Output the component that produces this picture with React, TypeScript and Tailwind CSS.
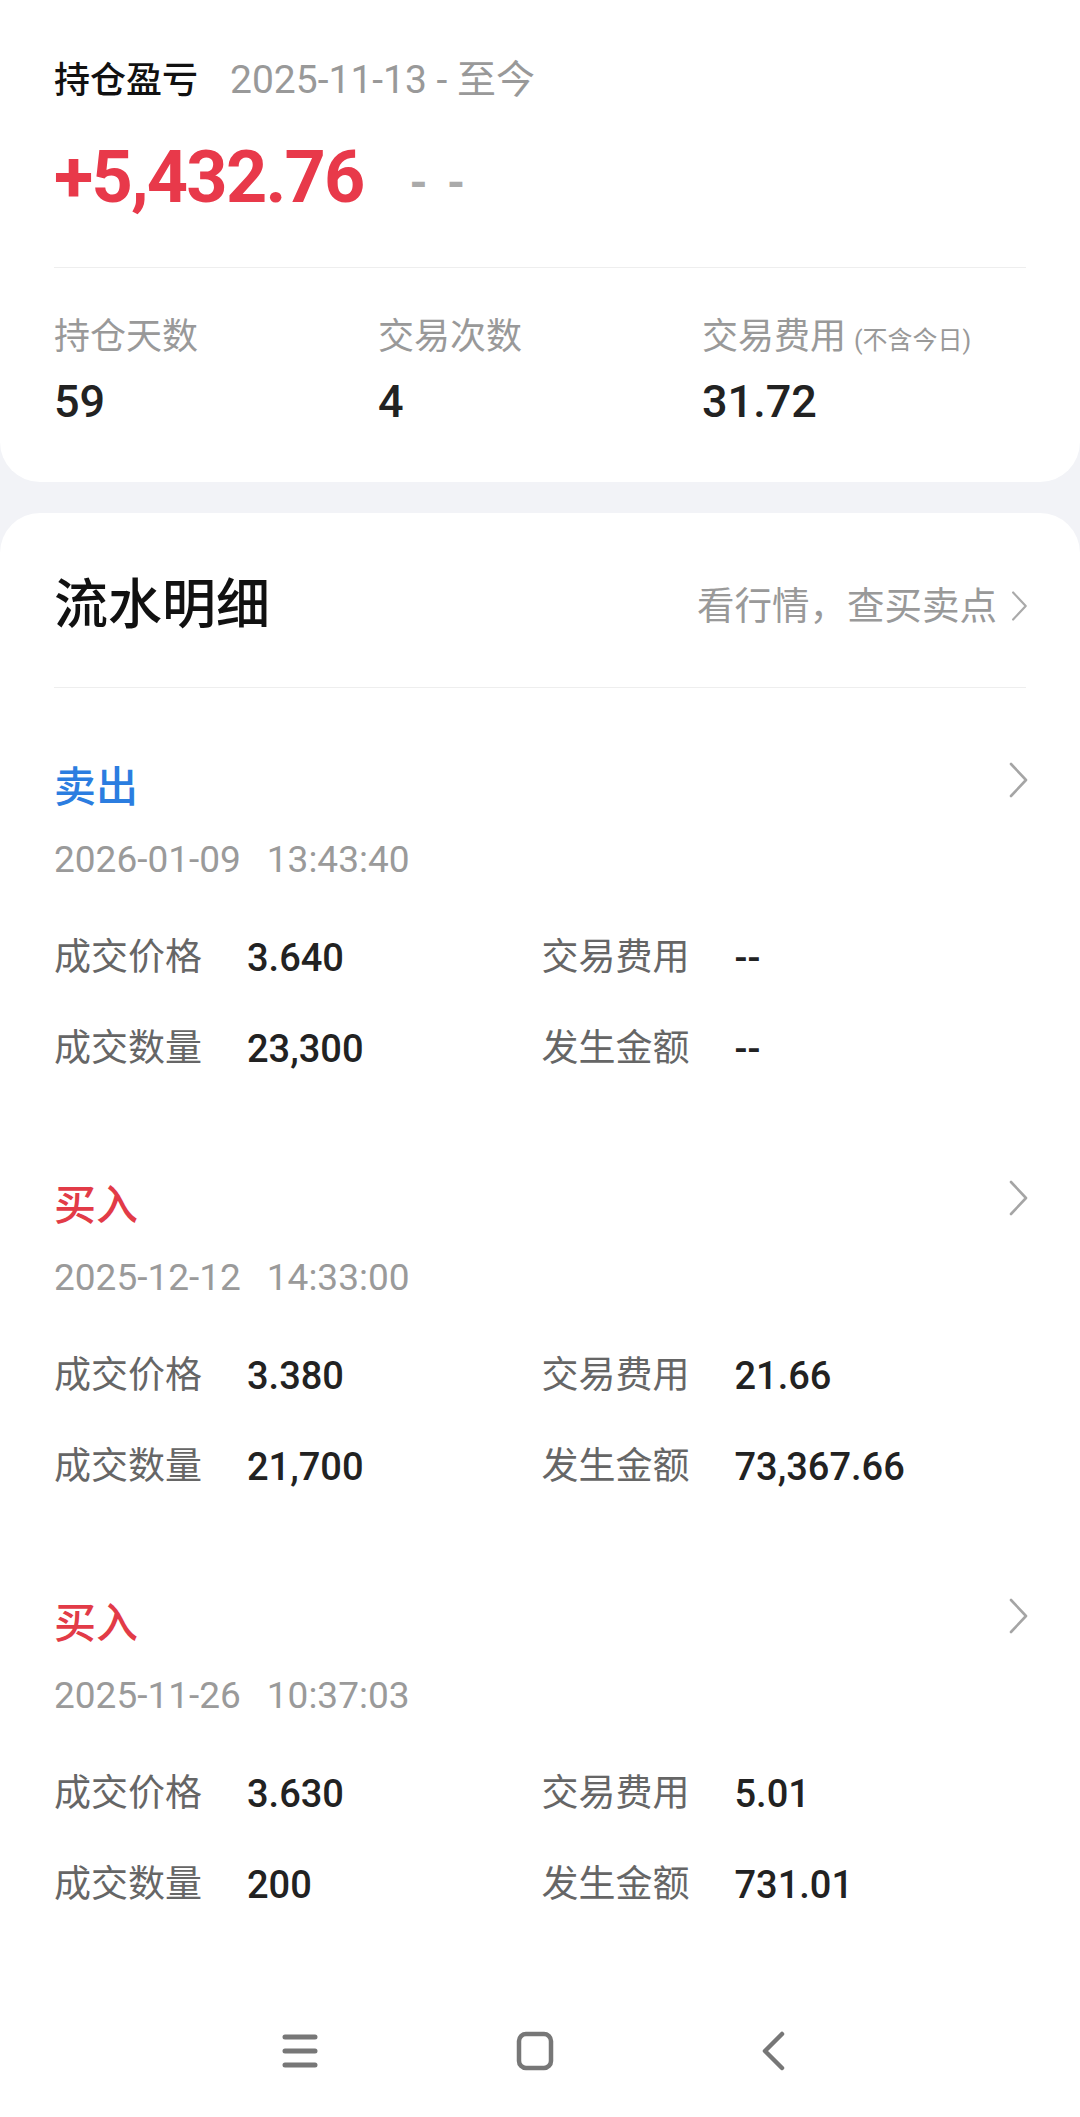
import React from 'react'

const font = "font-['Roboto','Noto_Sans_CJK_SC',sans-serif]"

const records = [
  { type: '卖出', tone: 'text-[#2b7de0]', date: '2026-01-09', time: '13:43:40', price: '3.640', fee: '--', qty: '23,300', amount: '--' },
  { type: '买入', tone: 'text-[#e23b47]', date: '2025-12-12', time: '14:33:00', price: '3.380', fee: '21.66', qty: '21,700', amount: '73,367.66' },
  { type: '买入', tone: 'text-[#e23b47]', date: '2025-11-26', time: '10:37:03', price: '3.630', fee: '5.01', qty: '200', amount: '731.01' },
]

function Chevron({ className }: { className?: string }) {
  return (
    <svg viewBox="0 0 22 38" className={className} fill="none" stroke="currentColor" strokeWidth="2.6" strokeLinecap="round" strokeLinejoin="round">
      <path d="M4 3 L19 19 L4 35" />
    </svg>
  )
}

function Field({ label, value }: { label: string; value: string }) {
  return (
    <div className="flex items-center h-[50px]">
      <span className="w-[193px] shrink-0 text-[37px] leading-[50px] text-[#666]">{label}</span>
      <span className="text-[38px] leading-[50px] font-medium text-[#222]">{value}</span>
    </div>
  )
}

export default function App() {
  return (
    <div className={`${font} h-[2117px] overflow-hidden bg-[#f2f3f7] flex flex-col`}>
      {/* summary card */}
      <div className="bg-white rounded-b-[40px] px-[54px] pt-[56px] pb-[52px]">
        <div className="flex items-baseline gap-[32px] h-[48px]">
          <span className="text-[36px] leading-[48px] font-medium text-[#111]">持仓盈亏</span>
          <span className="text-[39px] leading-[48px] text-[#999]">2025-11-13 - 至今</span>
        </div>
        <div className="flex items-center mt-[34px] h-[80px]">
          <span className="text-[72px] leading-[80px] font-bold tracking-[-1.8px] text-[#e8394a]">+5,432.76</span>
          <span className="ml-[46px] mt-[10px] text-[46px] leading-[80px] font-bold text-[#aaa] tracking-[4px]">- -</span>
        </div>
        <div className="mt-[49px] h-px bg-[#eeeeee]" />
        <div className="grid grid-cols-3 mt-[45px]">
          {[
            ['持仓天数', '59', ''],
            ['交易次数', '4', ''],
            ['交易费用', '31.72', '(不含今日)'],
          ].map(([k, v, note]) => (
            <div key={k}>
              <div className="flex items-baseline h-[48px]">
                <span className="text-[36px] leading-[48px] text-[#999]">{k}</span>
                {note && <span className="ml-[8px] text-[25px] text-[#999]">{note}</span>}
              </div>
              <div className="mt-[13px] text-[45px] leading-[56px] font-medium text-[#222]">{v}</div>
            </div>
          ))}
        </div>
      </div>

      {/* records card */}
      <div className="mt-[31px] flex-1 bg-white rounded-t-[40px] px-[51px] pt-[57px] flex flex-col">
        <div className="flex items-center justify-between h-[72px] pl-[3px]">
          <span className="text-[54px] leading-[72px] font-medium text-[#111]">流水明细</span>
          <div className="flex items-center gap-[12px] text-[#999]">
            <span className="text-[37.5px] leading-[48px]">看行情，查买卖点</span>
            <Chevron className="w-[20px] h-[32px] text-[#aaa]" />
          </div>
        </div>
        <div className="mt-[45px] h-px bg-[#eeeeee] mx-[3px]" />

        <div className="pl-[3px] pt-[72px] flex flex-col gap-[104px]">
          {records.map((r, i) => (
            <div key={i}>
              <div className="flex items-center justify-between h-[56px]">
                <span className={`text-[42px] leading-[56px] font-medium ${r.tone}`}>{r.type}</span>
                <Chevron className="w-[22px] h-[38px] -mt-[16px] text-[#a5a5a5]" />
              </div>
              <div className="mt-[22px] flex gap-[26px] text-[37px] leading-[44px] text-[#9a9a9a]">
                <span>{r.date}</span>
                <span>{r.time}</span>
              </div>
              <div className="mt-[51px] grid grid-cols-2">
                <Field label="成交价格" value={r.price} />
                <Field label="交易费用" value={r.fee} />
              </div>
              <div className="mt-[41px] grid grid-cols-2">
                <Field label="成交数量" value={r.qty} />
                <Field label="发生金额" value={r.amount} />
              </div>
            </div>
          ))}
        </div>

        <div className="mt-auto h-[132px] flex items-center pl-[230px] text-[#777]">
          <svg viewBox="0 0 38 38" className="w-[38px] h-[38px]" fill="none" stroke="currentColor" strokeWidth="5" strokeLinecap="round">
            <path d="M4 5 H34 M4 19 H34 M4 33 H34" />
          </svg>
          <svg viewBox="0 0 38 40" className="ml-[197px] w-[38px] h-[40px]" fill="none" stroke="currentColor" strokeWidth="4.5">
            <rect x="3" y="3" width="32" height="34" rx="7" />
          </svg>
          <svg viewBox="0 0 24 40" className="ml-[207px] w-[24px] h-[40px]" fill="none" stroke="currentColor" strokeWidth="4.5" strokeLinecap="round" strokeLinejoin="round">
            <path d="M21 3 L4 20 L21 37" />
          </svg>
        </div>
      </div>
    </div>
  )
}
